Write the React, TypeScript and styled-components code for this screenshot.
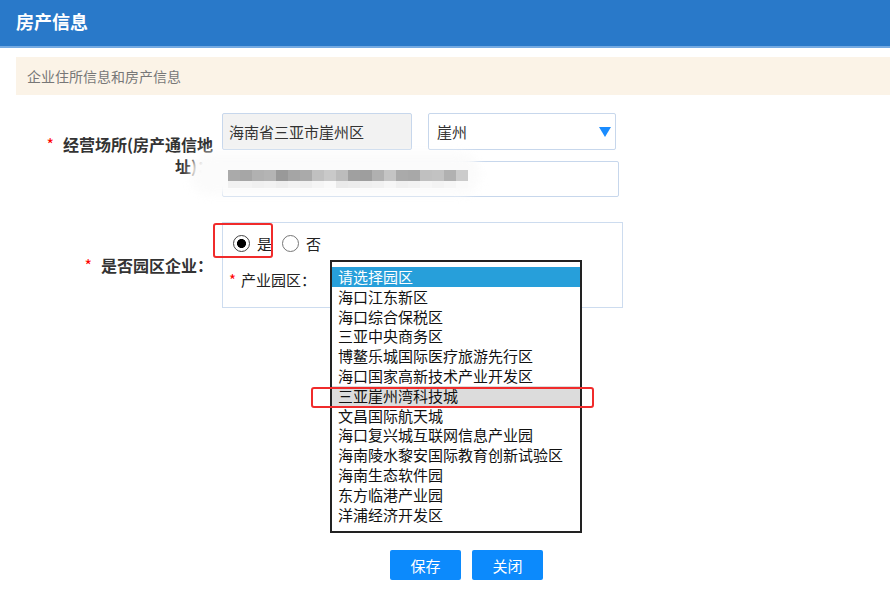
import React from "react";
import styled, { createGlobalStyle } from "styled-components";

const GlobalStyle = createGlobalStyle`
    body {
        margin: 0;
        background: #fff;
        font-family: "Noto Sans CJK SC", "Noto Sans", sans-serif;
        color: #333;
    }
`;

const parks = [
    "请选择园区",
    "海口江东新区",
    "海口综合保税区",
    "三亚中央商务区",
    "博鳌乐城国际医疗旅游先行区",
    "海口国家高新技术产业开发区",
    "三亚崖州湾科技城",
    "文昌国际航天城",
    "海口复兴城互联网信息产业园",
    "海南陵水黎安国际教育创新试验区",
    "海南生态软件园",
    "东方临港产业园",
    "洋浦经济开发区",
];

// redacted address, two rows of grey blocks
const mosaicTop = [
    "#aaa", "#a6a6a6", "#b1b1b1", "#b4b4b4", "#999", "#a5a5a5", "#aaa", "#c0c0c0", "#c9c9c9", "#bcbcbc",
    "#a0a0a0", "#9e9e9e", "#b0b0b0", "#c4c4c4", "#aaa", "#a8a8a8", "#c0c0c0", "#c2c2c2", "#b1b1b1", "#cbcbcb",
];
const mosaicBottom = [
    "#f1f1f1", "#f3f3f3", "#f0f0f0", "#f2f2f2", "#eee", "#f2f2f2", "#f0f0f0", "#f5f5f5", "#f9f9f9", "#eaeaea",
    "#ececec", "#efefef", "#f1f1f1", "#f6f6f6", "#f0f0f0", "#f2f2f2", "#f6f6f6", "#f3f3f3", "#f6f6f6", "#fafafa",
];

export default function App() {
    return (
        <>
            <GlobalStyle />
            <Header>房产信息</Header>
            <Notice>企业住所信息和房产信息</Notice>

            <Form>
                <Row>
                    <Label>
                        <Req>*</Req>经营场所(房产通信地址)：
                    </Label>
                    <Fields>
                        <FieldLine>
                            <TextBox $readonly $width={190}>
                                海南省三亚市崖州区
                            </TextBox>
                            <SelectBox>
                                崖州
                                <Arrow viewBox="0 0 12 10">
                                    <path d="M0 0 H12 L6 10 Z" fill="#1a8cff" />
                                </Arrow>
                            </SelectBox>
                        </FieldLine>
                        <TextBox $width={397} $height={36}>
                            <Redacted>
                                <Glow />
                                <MosaicRow>
                                    {mosaicTop.map((c, i) => (
                                        <Tile key={i} style={{ background: c }} $h={11} />
                                    ))}
                                </MosaicRow>
                                <MosaicRow>
                                    {mosaicBottom.map((c, i) => (
                                        <Tile key={i} style={{ background: c }} $h={7} />
                                    ))}
                                </MosaicRow>
                            </Redacted>
                        </TextBox>
                    </Fields>
                </Row>

                <Row $gap={25}>
                    <Label>
                        <Req>*</Req>是否园区企业：
                    </Label>
                    <ParkBox>
                        <RadioLine>
                            <RadioItem>
                                <RadioDot $checked />是
                            </RadioItem>
                            <RadioItem>
                                <RadioDot />否
                            </RadioItem>
                        </RadioLine>
                        <ParkLabel>
                            <SmallReq>*</SmallReq>产业园区：
                        </ParkLabel>
                        <Mark $left={-10} $top={0} $w={60} $h={35} />
                        <ParkList>
                            {parks.map((p, i) => (
                                <ParkOption key={p} $selected={i === 0} $hover={i === 6}>
                                    {p}
                                </ParkOption>
                            ))}
                            <Mark $left={-21} $top={125} $w={283} $h={21} />
                        </ParkList>
                    </ParkBox>
                </Row>

                <Buttons>
                    <Button>保存</Button>
                    <Button>关闭</Button>
                </Buttons>
            </Form>
        </>
    );
}

const Header = styled.div`
    height: 46px;
    line-height: 42px;
    padding-left: 16px;
    background: #2979c9;
    border-bottom: 2px solid #74aae2;
    color: #fff;
    font-size: 18px;
    font-weight: bold;
`;

const Notice = styled.div`
    margin: 9px 0 0 16px;
    height: 38px;
    line-height: 38px;
    padding-left: 11px;
    background: #fbf3e7;
    color: #777;
    font-size: 14px;
`;

const Form = styled.div`
    margin-top: 18px;
`;

const Row = styled.div<{ $gap?: number }>`
    display: flex;
    align-items: center;
    margin-top: ${(p) => p.$gap || 0}px;
`;

const Label = styled.div`
    width: 213px;
    box-sizing: border-box;
    padding-left: 43px;
    text-align: right;
    font-size: 16px;
    font-weight: bold;
    line-height: 22px;
    color: #333;
`;

const Req = styled.span`
    color: #f00;
    font-weight: normal;
    margin-right: 9px;
`;

const SmallReq = styled.span`
    color: #f00;
    margin-right: 5px;
`;

const Fields = styled.div`
    margin-left: 9px;
    display: flex;
    flex-direction: column;
    gap: 11px;
`;

const FieldLine = styled.div`
    display: flex;
    gap: 16px;
`;

const TextBox = styled.div<{ $readonly?: boolean; $width: number; $height?: number }>`
    position: relative;
    box-sizing: border-box;
    width: ${(p) => p.$width}px;
    height: ${(p) => p.$height || 37}px;
    display: flex;
    align-items: center;
    padding-left: 6px;
    border: 1px solid #c7d7ec;
    border-radius: 2px;
    background: ${(p) => (p.$readonly ? "#f2f2f2" : "#fff")};
    font-size: 15px;
    color: #333;
`;

const SelectBox = styled.div`
    box-sizing: border-box;
    width: 188px;
    height: 37px;
    display: flex;
    align-items: center;
    justify-content: space-between;
    padding: 0 4px 0 8px;
    border: 1px solid #c7d7ec;
    border-radius: 2px;
    font-size: 15px;
    color: #333;
`;

const Arrow = styled.svg`
    width: 12px;
    height: 10px;
`;

const Redacted = styled.div`
    position: relative;
    margin-left: -1px;
    display: flex;
    flex-direction: column;
`;

const Glow = styled.div`
    position: absolute;
    left: -38px;
    top: -17px;
    width: 290px;
    height: 42px;
    border-radius: 20px;
    background: rgba(251, 251, 251, 1);
    filter: blur(5px);
`;

const MosaicRow = styled.div`
    position: relative;
    display: flex;
`;

const Tile = styled.span<{ $h: number }>`
    width: 12px;
    height: ${(p) => p.$h}px;
`;

const ParkBox = styled.div`
    position: relative;
    margin-left: 9px;
    box-sizing: border-box;
    width: 401px;
    height: 86px;
    border: 1px solid #cddcef;
    padding: 10px 0 0 10px;
`;

const RadioLine = styled.div`
    display: flex;
    gap: 10px;
    height: 20px;
`;

const RadioItem = styled.label`
    display: flex;
    align-items: center;
    gap: 7px;
    font-size: 15px;
    color: #222;
`;

const RadioDot = styled.span<{ $checked?: boolean }>`
    box-sizing: border-box;
    width: 17px;
    height: 17px;
    border-radius: 50%;
    border: 1px solid ${(p) => (p.$checked ? "#444" : "#777")};
    background: ${(p) =>
        p.$checked ? "radial-gradient(circle, #000 0 4.2px, #fff 4.8px)" : "#fff"};
`;

const ParkLabel = styled.div`
    margin: 17px 0 0 -4px;
    font-size: 15px;
    line-height: 20px;
    color: #222;
`;

const ParkList = styled.div`
    position: absolute;
    left: 107px;
    top: 37px;
    width: 252px;
    box-sizing: border-box;
    border: 2px solid #222;
    background: #fff;
    padding: 5px 0 7px;
    z-index: 2;
`;

const ParkOption = styled.div<{ $selected?: boolean; $hover?: boolean }>`
    height: 19.8px;
    line-height: 19.8px;
    padding-left: 6px;
    font-size: 15px;
    white-space: nowrap;
    color: ${(p) => (p.$selected ? "#fff" : "#111")};
    background: ${(p) => (p.$selected ? "#279fda" : p.$hover ? "#dcdcdc" : "transparent")};
`;

const Mark = styled.div<{ $left: number; $top: number; $w: number; $h: number }>`
    position: absolute;
    left: ${(p) => p.$left}px;
    top: ${(p) => p.$top}px;
    width: ${(p) => p.$w}px;
    height: ${(p) => p.$h}px;
    box-sizing: border-box;
    border: 2px solid #f02b2b;
    border-radius: 3px;
    z-index: 3;
`;

const Buttons = styled.div`
    display: flex;
    gap: 11px;
    margin-top: 242px;
    padding-left: 390px;
`;

const Button = styled.button`
    width: 71px;
    height: 30px;
    border: none;
    border-radius: 2px;
    background: #0c8afc;
    color: #fff;
    font-family: "Noto Sans CJK SC", sans-serif;
    font-size: 15px;
    padding: 0;
`;
